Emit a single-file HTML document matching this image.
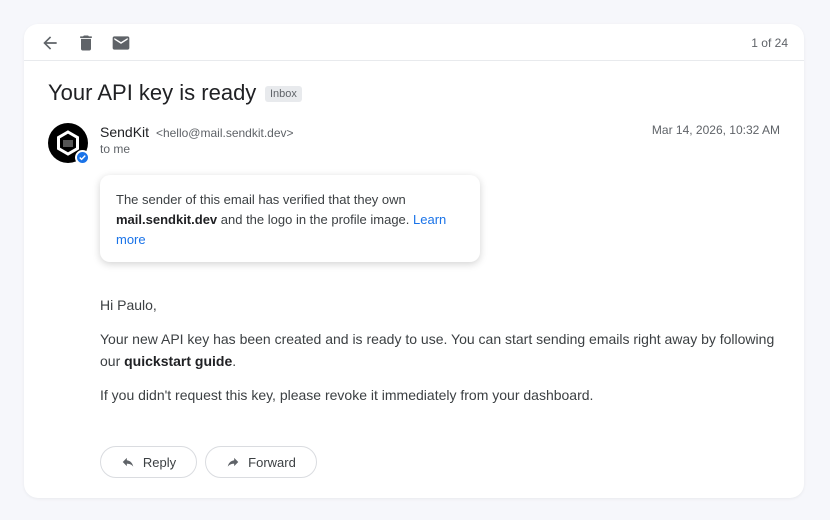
<!DOCTYPE html>
<html><head><style>
*{box-sizing:border-box;margin:0;padding:0}
body{width:830px;height:520px;background:#f6f7fb;font-family:"Liberation Sans",Arial,sans-serif;color:#202124;position:relative;overflow:hidden}
.card{position:absolute;left:24px;top:24px;width:780px;height:474px;background:#fff;border-radius:14px;box-shadow:0 1px 3px rgba(0,0,0,.06)}
.bar{height:37px;border-bottom:1px solid #e8eaed;position:relative}
.ic{position:absolute;top:9px}
.count{position:absolute;right:16px;top:12px;font-size:12px;color:#5f6368}
h1{position:absolute;left:24px;top:56px;font-size:22px;font-weight:400;color:#202124}
.tag{position:absolute;left:241px;top:62px;background:#e8eaed;color:#5f6368;font-size:11px;padding:2px 5px;border-radius:3px}
.av{position:absolute;left:24px;top:99px;width:40px;height:40px;border-radius:50%;background:#000}
.badge{position:absolute;left:51px;top:126px;width:15px;height:15px;border-radius:50%;background:#1a73e8;border:2px solid #fff}
.name{position:absolute;left:76px;top:100px;font-size:14px}
.name span{font-size:12px;color:#5f6368;margin-left:3px}
.tome{position:absolute;left:76px;top:118px;font-size:12px;color:#5f6368}
.date{position:absolute;right:24px;top:99px;font-size:12px;color:#5f6368}
.pop{position:absolute;left:76px;top:151px;width:380px;height:87px;background:#fff;border-radius:10px;box-shadow:0 2px 8px rgba(0,0,0,.18);padding:15px 16px;font-size:13px;line-height:20px;color:#3c4043}
.pop a{color:#1a73e8;text-decoration:none}
.body{position:absolute;left:76px;top:270px;width:690px;font-size:14px;line-height:22px;color:#3c4043}
.body p{margin-bottom:12px}
.btn{position:absolute;top:422px;height:32px;border:1px solid #dadce0;border-radius:16px;font-size:13px;color:#3c4043;display:flex;align-items:center;justify-content:center;gap:8px}
</style></head><body>
<div class="card">
 <div class="bar">
  <svg class="ic" style="left:16px" width="20" height="20" viewBox="0 0 24 24"><path d="M20 11H7.8l5.6-5.6L12 4l-8 8 8 8 1.4-1.4L7.8 13H20z" fill="#5f6368"/></svg>
  <svg class="ic" style="left:52px" width="20" height="20" viewBox="0 0 24 24"><path d="M6 19c0 1.1.9 2 2 2h8c1.1 0 2-.9 2-2V7H6zM19 4h-3.5l-1-1h-5l-1 1H5v2h14z" fill="#5f6368"/></svg>
  <svg class="ic" style="left:87px" width="20" height="20" viewBox="0 0 24 24"><path d="M20 4H4c-1.1 0-2 .9-2 2v12c0 1.1.9 2 2 2h16c1.1 0 2-.9 2-2V6c0-1.1-.9-2-2-2zm0 4l-8 5-8-5V6l8 5 8-5z" fill="#5f6368"/></svg>
  <div class="count">1 of 24</div>
 </div>
 <h1>Your API key is ready</h1>
 <div class="tag">Inbox</div>
 <div class="av"><svg width="40" height="40" viewBox="0 0 40 40"><path d="M20 9l9.5 5.5v11L20 31l-9.5-5.5v-11z" fill="none" stroke="#fff" stroke-width="3"/><rect x="15" y="17" width="10" height="7" fill="#555"/></svg></div>
 <div class="badge"><svg width="11" height="11" viewBox="0 0 12 12" style="display:block"><path d="M3 6l2 2 4-4" stroke="#fff" stroke-width="1.6" fill="none"/></svg></div>
 <div class="name">SendKit <span>&lt;hello@mail.sendkit.dev&gt;</span></div>
 <div class="tome">to me</div>
 <div class="date">Mar 14, 2026, 10:32 AM</div>
 <div class="pop">The sender of this email has verified that they own <b style="color:#202124">mail.sendkit.dev</b> and the logo in the profile image. <a>Learn more</a></div>
 <div class="body">
  <p>Hi Paulo,</p>
  <p>Your new API key has been created and is ready to use. You can start sending emails right away by following our <b style="color:#202124">quickstart guide</b>.</p>
  <p>If you didn't request this key, please revoke it immediately from your dashboard.</p>
 </div>
 <div class="btn" style="left:76px;width:97px"><svg width="14" height="14" viewBox="0 0 24 24"><path d="M10 9V5l-7 7 7 7v-4.1c5 0 8.5 1.6 11 5.1-1-5-4-10-11-11z" fill="#5f6368"/></svg>Reply</div>
 <div class="btn" style="left:181px;width:112px"><svg width="14" height="14" viewBox="0 0 24 24"><path d="M14 9V5l7 7-7 7v-4.1c-5 0-8.5 1.6-11 5.1 1-5 4-10 11-11z" fill="#5f6368"/></svg>Forward</div>
</div>
</body></html>
